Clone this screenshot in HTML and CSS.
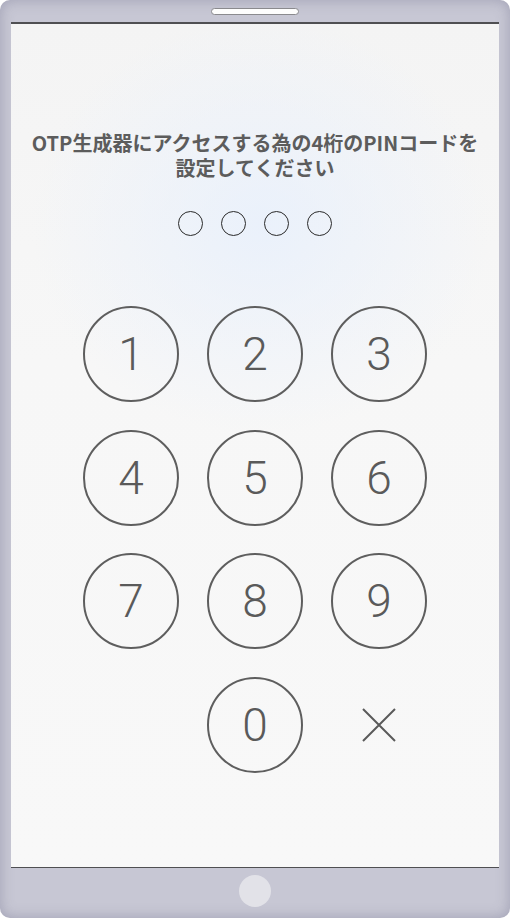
FILE: index.html
```html
<!DOCTYPE html>
<html lang="ja">
<head>
  <meta charset="UTF-8">
  <meta name="viewport" content="width=device-width, initial-scale=1.0">
  <title>PIN設定</title>
  <link rel="stylesheet" href="styles.css">
</head>
<body>
  <div class="phone">
    <div class="phone-top">
      <div class="speaker"></div>
    </div>

    <div class="screen">
      <p class="prompt">OTP生成器にアクセスする為の4桁のPINコードを<br>設定してください</p>

      <div class="pin-dots">
        <span class="dot"></span>
        <span class="dot"></span>
        <span class="dot"></span>
        <span class="dot"></span>
      </div>

      <div class="keypad">
        <button class="key">1</button>
        <button class="key">2</button>
        <button class="key">3</button>
        <button class="key">4</button>
        <button class="key">5</button>
        <button class="key">6</button>
        <button class="key">7</button>
        <button class="key">8</button>
        <button class="key">9</button>
        <span class="key-empty"></span>
        <button class="key">0</button>
        <button class="key key-delete" aria-label="削除">
          <svg width="34" height="34" viewBox="0 0 34 34">
            <path d="M1 1 L33 33 M33 1 L1 33" stroke="#5a5a5a" stroke-width="2" fill="none"/>
          </svg>
        </button>
      </div>
    </div>

    <div class="phone-bottom">
      <div class="home-button"></div>
    </div>
  </div>
</body>
</html>
```

FILE: styles.css
```css
html, body {
  margin: 0;
  padding: 0;
  background: #ffffff;
}
.phone {
  width: 510px;
  height: 918px;
  box-sizing: border-box;
  padding: 0 11px;
  display: flex;
  flex-direction: column;
  background: #c7c7d4;
  border-radius: 10px;
  box-shadow: inset 0 0 14px rgba(90,90,120,0.35);
}
.phone-top {
  height: 22px;
  display: flex;
  justify-content: center;
}
.speaker {
  width: 86px;
  height: 5px;
  margin-top: 8px;
  background: #fdfdfd;
  border: 1px solid #8a8a8e;
  border-radius: 4px;
}
.screen {
  flex: 1;
  border-top: 2px solid #4f4f52;
  border-bottom: 1px solid #4f4f52;
  background:
    radial-gradient(ellipse 230px 210px at 250px 200px, rgba(232,240,252,0.85), rgba(240,243,248,0) 100%),
    linear-gradient(180deg, #f4f4f4 0%, #f7f7f7 40%, #f8f8f8 100%);
  display: flex;
  flex-direction: column;
  align-items: center;
}
.prompt {
  margin: 106px 0 0;
  font-family: "Noto Sans CJK JP", "Liberation Sans", sans-serif;
  font-weight: 700;
  font-size: 20px;
  line-height: 25px;
  color: #5c5c5c;
  text-align: center;
  letter-spacing: 0;
}
.pin-dots {
  display: flex;
  gap: 18px;
  margin-top: 31px;
}
.dot {
  width: 23px;
  height: 23px;
  border: 1.5px solid #2a2a2a;
  border-radius: 50%;
}
.keypad {
  display: grid;
  grid-template-columns: repeat(3, 96px);
  grid-auto-rows: 96px;
  column-gap: 28px;
  row-gap: 27.5px;
  margin-top: 70px;
}
.key {
  width: 96px;
  height: 96px;
  box-sizing: border-box;
  padding: 0;
  border: 2px solid #5e5e5e;
  border-radius: 50%;
  background: transparent;
  font-family: Roboto, "Noto Sans", sans-serif;
  font-weight: 300;
  font-size: 46px;
  color: #5a5a5a;
  display: flex;
  align-items: center;
  justify-content: center;
  cursor: pointer;
}
.key-delete {
  border: none;
}
.phone-bottom {
  height: 50px;
  display: flex;
  justify-content: center;
}
.home-button {
  width: 32px;
  height: 32px;
  margin-top: 7px;
  border-radius: 50%;
  background: #e2e2e8;
}
```
